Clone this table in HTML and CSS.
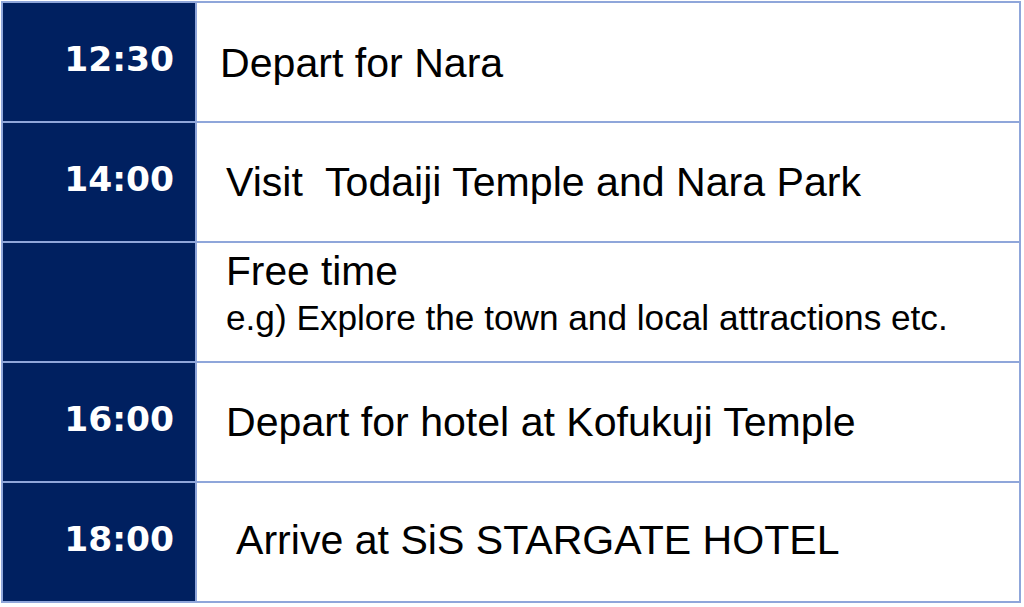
FILE: index.html
```html
<!DOCTYPE html>
<html lang="en">
<head>
    <meta charset="UTF-8">
    <title>Nara Schedule</title>
    <link rel="stylesheet" href="styles.css">
</head>
<body>
    <!-- Day schedule: time column on the left, plan on the right -->
    <div class="schedule">
        <div class="time">12:30</div>
        <div class="plan plan-tight">Depart for Nara</div>

        <div class="time">14:00</div>
        <div class="plan">Visit&nbsp; Todaiji Temple and Nara Park</div>

        <div class="time"></div>
        <div class="plan plan-stack">
            <span class="plan-title">Free time</span>
            <span class="plan-note">e.g) Explore the town and local attractions etc.</span>
        </div>

        <div class="time">16:00</div>
        <div class="plan">Depart for hotel at Kofukuji Temple</div>

        <div class="time">18:00</div>
        <div class="plan plan-wide">Arrive at SiS STARGATE HOTEL</div>
    </div>
</body>
</html>
```

FILE: styles.css
```css
body {
    margin: 0;
    padding: 1px;
    background-color: #fff;
}
.schedule {
    display: grid;
    grid-template-columns: 192px 1fr;
    grid-auto-rows: 118px;
    gap: 2px;
    padding: 2px;
    width: 1016px;
    background-color: #8fa6da;
}
.time {
    display: flex;
    align-items: center;
    justify-content: flex-end;
    padding: 0 21px 6px 0;
    background-color: #002060;
    color: #fff;
    font-family: "DejaVu Sans", Verdana, sans-serif;
    font-weight: bold;
    font-size: 34.5px;
}
.plan {
    display: flex;
    align-items: center;
    padding: 0 0 0 29px;
    background-color: #fff;
    color: #000;
    font-family: "Liberation Sans", Arial, sans-serif;
    font-size: 41.1px;
    white-space: nowrap;
}
.plan-tight {
    padding-left: 23px;
    padding-top: 2px;
}
.plan-wide {
    padding-left: 39px;
    padding-bottom: 4px;
}
.plan-stack {
    flex-direction: column;
    align-items: flex-start;
    justify-content: flex-start;
    padding-top: 5px;
}
.plan-title {
    font-size: 40.7px;
    line-height: 46px;
}
.plan-note {
    font-size: 35.2px;
    line-height: 47px;
}
```
